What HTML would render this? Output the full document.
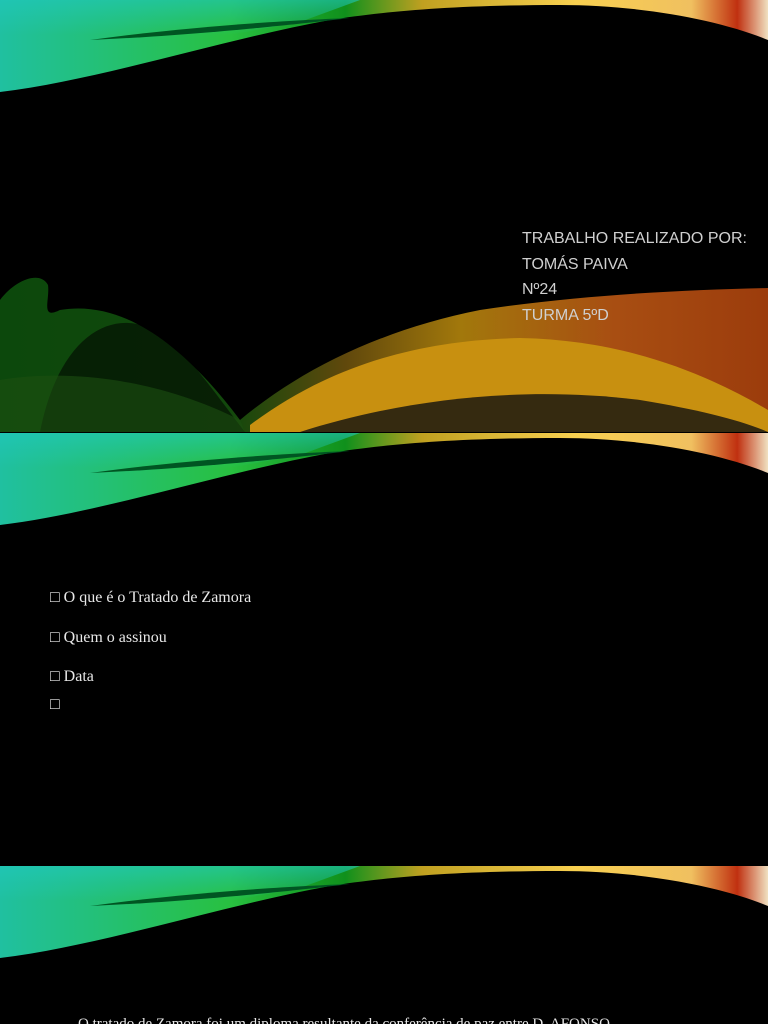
<!DOCTYPE html>
<html><head><meta charset="utf-8"><style>
body{margin:0;background:#000;width:768px;height:1024px;overflow:hidden;position:relative;font-family:"Liberation Sans",sans-serif}
.s{position:absolute;left:0;width:768px;overflow:hidden;background:#000}
.t{position:absolute;color:#d0d0d0;font-size:16px}
.b{position:absolute;left:50px;color:#e8e8e8;font-family:"Liberation Serif",serif;font-size:16px}
</style></head><body>
<svg width="0" height="0" style="position:absolute"><defs>
<linearGradient id="g1" x1="0" y1="0" x2="1" y2="0"><stop offset="0" stop-color="#20c0a0"/><stop offset=".3" stop-color="#28c040"/><stop offset=".45" stop-color="#10901c"/><stop offset=".55" stop-color="#c0a020"/><stop offset=".75" stop-color="#f8d050"/><stop offset=".9" stop-color="#f0c060"/><stop offset=".96" stop-color="#c03010"/><stop offset="1" stop-color="#f0e0c0"/></linearGradient>
<linearGradient id="gv" x1="0" y1="0" x2="0" y2="1"><stop offset="0" stop-color="#20c8c0" stop-opacity=".6"/><stop offset=".5" stop-color="#20c8c0" stop-opacity="0"/></linearGradient>
<linearGradient id="g2" x1="0" y1="0" x2="1" y2="0"><stop offset="0" stop-color="#106010"/><stop offset=".3" stop-color="#186010"/><stop offset=".45" stop-color="#806010"/><stop offset=".6" stop-color="#d8a010"/><stop offset=".8" stop-color="#e06818"/><stop offset="1" stop-color="#d05010"/></linearGradient>
<g id="top">
<path d="M0 0H768V40C720 20 640 5 560 5 450 5 380 12 330 20 220 40 100 80 0 92Z" fill="url(#g1)"/>
<path d="M0 0H360L300 22C200 40 100 60 0 70Z" fill="url(#gv)"/>
<path d="M90 40C200 25 300 20 350 18 300 24 200 35 90 40Z" fill="#052"/>
</g></defs></svg>
<div class="s" style="top:0;height:432px">
<svg width="768" height="432" style="position:absolute;top:0;left:0"><use href="#top"/>
<path d="M0 432V300C15 280 40 270 48 285 50 300 40 320 60 310 120 300 180 340 240 420 300 370 380 330 480 310 580 295 680 290 768 288V432Z" fill="url(#g2)" opacity=".75"/>
<path d="M250 425C330 365 420 340 520 338 620 340 700 370 768 410V432H250Z" fill="#c89010"/>
<path d="M300 432C400 400 520 385 640 400 700 410 740 420 768 432Z" fill="#101010" opacity=".8"/>
<path d="M40 432C60 330 120 300 170 340 200 370 220 400 245 432Z" fill="#000" opacity=".55"/>
<path d="M0 432V380C60 370 150 375 240 420L245 432Z" fill="#1c5010" opacity=".6"/>
</svg>
<div class="t" style="left:522px;top:230px">TRABALHO REALIZADO POR:</div>
<div class="t" style="left:522px;top:256px">TOMÁS PAIVA</div>
<div class="t" style="left:522px;top:281px">Nº24</div>
<div class="t" style="left:522px;top:307px">TURMA 5ºD</div>
</div>
<div class="s" style="top:433px;height:432px">
<svg width="768" height="432" style="position:absolute;top:0;left:0"><use href="#top"/></svg>
<div class="b" style="top:156px">&#9633; O que é o Tratado de Zamora</div>
<div class="b" style="top:196px">&#9633; Quem o assinou</div>
<div class="b" style="top:235px">&#9633; Data</div>
<div class="b" style="top:263px">&#9633;</div>
</div>
<div class="s" style="top:866px;height:158px">
<svg width="768" height="158" style="position:absolute;top:0;left:0"><use href="#top"/></svg>
<div class="b" style="left:78px;top:150px;font-size:15px">O tratado de Zamora foi um diploma resultante da conferência de paz entre D. AFONSO</div>
</div>
</body></html>
